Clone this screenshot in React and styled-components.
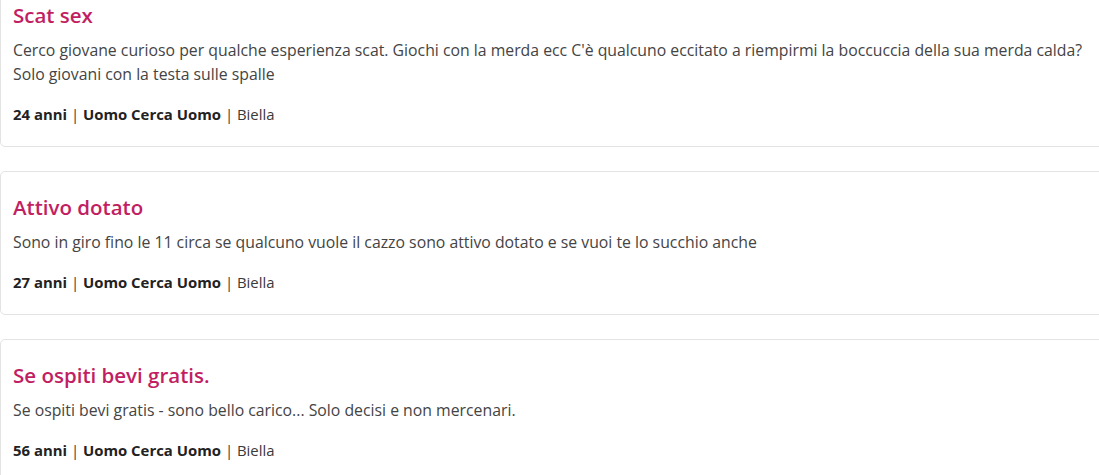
import React from "react";
import styled, { createGlobalStyle } from "styled-components";

const Global = createGlobalStyle`
  html, body { margin: 0; padding: 0; background: #fff; overflow: hidden; }
  body { font-family: "Open Sans", "Noto Sans", sans-serif; }
`;

const List = styled.div`
  display: flex;
  flex-direction: column;
  gap: 24px;
  margin-top: -21px;
  width: calc(100% + 8px);
`;

const Card = styled.article`
  border: 1px solid #e3e3e3;
  border-radius: 5px;
  padding: 22px 12px 20px;
  background: #fff;
`;

const Title = styled.h2`
  margin: 0 0 10px;
  font-size: 20.5px;
  line-height: 26px;
  font-weight: 600;
  color: #c21e62;
`;

const Body = styled.p`
  margin: 0 0 16px;
  font-size: 15.8px;
  line-height: 24px;
  color: #444;
  max-width: 1086px;
`;

const Meta = styled.div`
  font-size: 14.9px;
  line-height: 24px;
  color: #3a3a3a;
  b { font-weight: 700; color: #222; }
`;

const ads = [
  {
    title: "Scat sex",
    text: "Cerco giovane curioso per qualche esperienza scat. Giochi con la merda ecc C'è qualcuno eccitato a riempirmi la boccuccia della sua merda calda? Solo giovani con la testa sulle spalle",
    age: 24,
  },
  {
    title: "Attivo dotato",
    text: "Sono in giro fino le 11 circa se qualcuno vuole il cazzo sono attivo dotato e se vuoi te lo succhio anche",
    age: 27,
  },
  {
    title: "Se ospiti bevi gratis.",
    text: "Se ospiti bevi gratis - sono bello carico... Solo decisi e non mercenari.",
    age: 56,
  },
];

export default function App() {
  return (
    <>
      <Global />
      <List>
        {ads.map((a) => (
          <Card key={a.title}>
            <Title>{a.title}</Title>
            <Body>{a.text}</Body>
            <Meta>
              <b>{a.age} anni</b> | <b>Uomo Cerca Uomo</b> | Biella
            </Meta>
          </Card>
        ))}
      </List>
    </>
  );
}
